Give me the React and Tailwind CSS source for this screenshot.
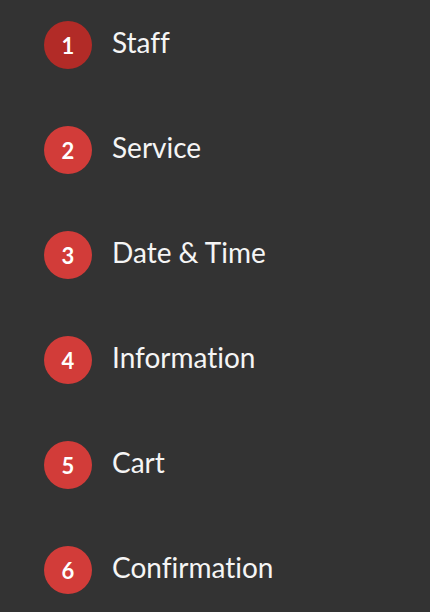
import React from "react";

const steps = ["Staff", "Service", "Date & Time", "Information", "Cart", "Confirmation"];

function StepItem({ index, label, active }) {
  return (
    <li className="flex items-center gap-5">
      <span
        className={`flex h-12 w-12 flex-shrink-0 items-center justify-center rounded-full text-[22px] font-bold text-white ${active ? "bg-[#b22b27]" : "bg-[#d23c39]"}`}
      >
        {index}
      </span>
      <span className="pb-[6px] text-[28px] leading-none text-[#f5f5f5] [font-variant-ligatures:none]">
        {label}
      </span>
    </li>
  );
}

export default function App() {
  return (
    <div
      className="min-h-[612px] w-full bg-[#333333] pl-[44px] pt-[21px]"
      style={{ fontFamily: "Lato, 'Open Sans', sans-serif" }}
    >
      <ul className="flex flex-col gap-[57px]">
        {steps.map((s, i) => (
          <StepItem key={s} index={i + 1} label={s} active={i === 0} />
        ))}
      </ul>
    </div>
  );
}
